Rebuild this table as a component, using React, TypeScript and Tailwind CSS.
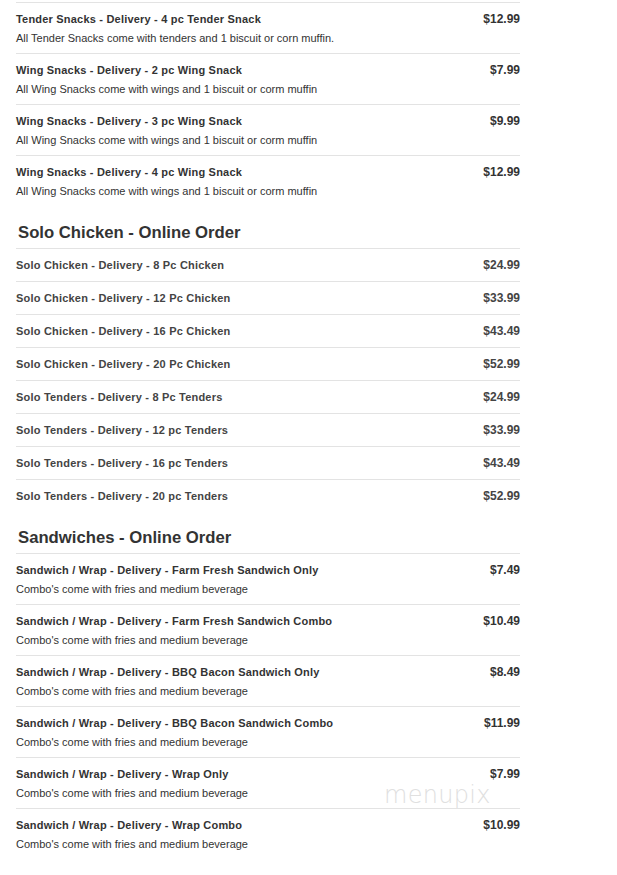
import React from 'react';

type Item = { name: string; price: string; desc?: string };

const SNACKS: Item[] = [
  { name: 'Tender Snacks - Delivery - 4 pc Tender Snack', price: '$12.99', desc: 'All Tender Snacks come with tenders and 1 biscuit or corn muffin.' },
  { name: 'Wing Snacks - Delivery - 2 pc Wing Snack', price: '$7.99', desc: 'All Wing Snacks come with wings and 1 biscuit or corm muffin' },
  { name: 'Wing Snacks - Delivery - 3 pc Wing Snack', price: '$9.99', desc: 'All Wing Snacks come with wings and 1 biscuit or corm muffin' },
  { name: 'Wing Snacks - Delivery - 4 pc Wing Snack', price: '$12.99', desc: 'All Wing Snacks come with wings and 1 biscuit or corm muffin' },
];

const SOLO: Item[] = [
  { name: 'Solo Chicken - Delivery - 8 Pc Chicken', price: '$24.99' },
  { name: 'Solo Chicken - Delivery - 12 Pc Chicken', price: '$33.99' },
  { name: 'Solo Chicken - Delivery - 16 Pc Chicken', price: '$43.49' },
  { name: 'Solo Chicken - Delivery - 20 Pc Chicken', price: '$52.99' },
  { name: 'Solo Tenders - Delivery - 8 Pc Tenders', price: '$24.99' },
  { name: 'Solo Tenders - Delivery - 12 pc Tenders', price: '$33.99' },
  { name: 'Solo Tenders - Delivery - 16 pc Tenders', price: '$43.49' },
  { name: 'Solo Tenders - Delivery - 20 pc Tenders', price: '$52.99' },
];

const COMBO = "Combo's come with fries and medium beverage";

const SANDWICHES: Item[] = [
  { name: 'Sandwich / Wrap - Delivery - Farm Fresh Sandwich Only', price: '$7.49', desc: COMBO },
  { name: 'Sandwich / Wrap - Delivery - Farm Fresh Sandwich Combo', price: '$10.49', desc: COMBO },
  { name: 'Sandwich / Wrap - Delivery - BBQ Bacon Sandwich Only', price: '$8.49', desc: COMBO },
  { name: 'Sandwich / Wrap - Delivery - BBQ Bacon Sandwich Combo', price: '$11.99', desc: COMBO },
  { name: 'Sandwich / Wrap - Delivery - Wrap Only', price: '$7.99', desc: COMBO },
  { name: 'Sandwich / Wrap - Delivery - Wrap Combo', price: '$10.99', desc: COMBO },
];

function Row({ item }: { item: Item }) {
  if (!item.desc) {
    return (
      <div className="flex items-center justify-between border-t border-[#e3e3e3] pt-[9px] pb-[9px] leading-[14px]">
        <span className="text-[11px] font-bold tracking-[0.2px] text-[#444]">{item.name}</span>
        <span className="text-[12px] font-bold text-[#444]">{item.price}</span>
      </div>
    );
  }
  return (
    <div className="border-t border-[#e3e3e3] pt-[9px] pb-[8px]">
      <div className="flex items-center justify-between leading-[14px]">
        <span className="text-[11px] font-bold tracking-[0.2px] text-[#333]">{item.name}</span>
        <span className="text-[12px] font-bold text-[#333]">{item.price}</span>
      </div>
      <p className="mt-[5px] text-[11px] leading-[14px] text-[#333]">{item.desc}</p>
    </div>
  );
}

export default function App() {
  return (
    <div className="relative min-h-[875px] w-[617px] bg-white pt-[2px] font-['Liberation_Sans',Arial,sans-serif]">
      <div className="ml-4 w-[504px]">
        <section>
          {SNACKS.map((it) => (
            <Row key={it.name} item={it} />
          ))}
        </section>
        <section>
          <h2 className="mt-[17px] pl-[2px] pb-[5px] text-[16.7px] font-bold leading-[20px] text-[#333]">
            Solo Chicken - Online Order
          </h2>
          {SOLO.map((it) => (
            <Row key={it.name} item={it} />
          ))}
        </section>
        <section>
          <h2 className="mt-[16px] pl-[2px] pb-[5px] text-[16.7px] font-bold leading-[20px] text-[#333]">
            Sandwiches - Online Order
          </h2>
          {SANDWICHES.map((it) => (
            <Row key={it.name} item={it} />
          ))}
        </section>
      </div>
      <span className="pointer-events-none absolute left-[384px] top-[777px] font-['DejaVu_Sans',sans-serif] text-[24px] font-extralight tracking-[0.3px] text-[#e0e0e0]">
        menupix
      </span>
    </div>
  );
}
